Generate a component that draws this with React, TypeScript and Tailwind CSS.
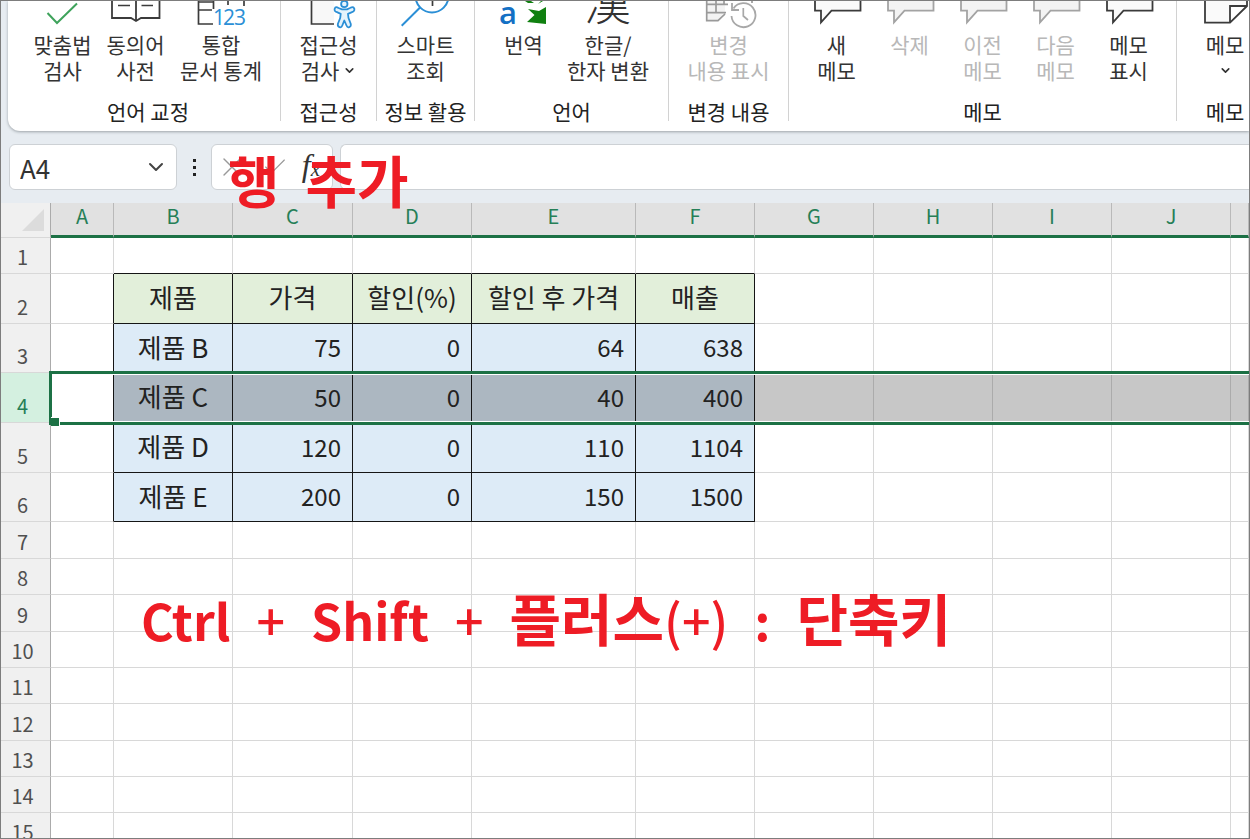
import { ReactNode } from 'react'
import clsx from 'clsx'
import { Check, ChevronDown, X } from 'lucide-react'

const SANS = "font-['Noto_Sans_CJK_KR','Noto_Sans',sans-serif]"

function Icon({ children }: { children: ReactNode }) {
    return (
        <svg width="56" height="30" viewBox="0 0 56 30" fill="none" className="shrink-0" aria-hidden="true">
            {children}
        </svg>
    )
}

const checkIcon = <Icon><path d="M12.5 12 22 22 42 2.5" stroke="#3fa35c" strokeWidth="2" /></Icon>

const bookIcon = (
    <Icon>
        <path d="M4 -2V17H23L28 20L33 17H51.5V-2M28 -2V19" stroke="#3b3b3b" strokeWidth="1.8" />
        <path d="M10 4.5H22M33.5 4.5H45" stroke="#3b3b3b" strokeWidth="1.6" />
    </Icon>
)

const statsIcon = (
    <Icon>
        <path d="M5.5 -1V23H20M5.5 9H19M20.5 -1V8M5.5 1H20M35 -1V4M51 -1V5" stroke="#3b3b3b" strokeWidth="1.7" />
        <text x="20" y="24" fontSize="21" fill="#2b8fd6" className="font-['Open_Sans']">
            <tspan x="20">1</tspan>
            <tspan x="30">2</tspan>
            <tspan x="41">3</tspan>
        </text>
    </Icon>
)

const accessibilityIcon = (
    <Icon>
        <path d="M10.5 -2V23H33V-2" fill="#f8f8f8" />
        <path d="M10.5 -2V23H33" stroke="#3b3b3b" strokeWidth="1.7" />
        <circle cx="43.3" cy="3" r="3.2" fill="#e5f3fc" stroke="#2b8fd6" strokeWidth="1.8" />
        <path
            d="M34.3 6.5C32.5 9 34 10.6 36 11.2L39.7 12.8L39.2 17L36.8 23C36.5 26.5 40.3 27.5 41.3 24.5L43.3 19.5L45.5 24.5C46.6 27.5 50.3 26.5 49.8 23L47.5 17L47 12.8L51 11.2C53.6 10.4 54.3 8 52.3 6.3C51 5.8 50 6.5 49 7L46 8.3H41L37.5 7C36.3 6.2 35 5.8 34.3 6.5Z"
            fill="#e5f3fc" stroke="#2b8fd6" strokeWidth="1.8" strokeLinejoin="round"
        />
    </Icon>
)

const lookupIcon = (
    <Icon>
        <circle cx="34" cy="-5" r="16.5" stroke="#2b8fd6" strokeWidth="2" />
        <path d="M22.3 6.3 3.7 24.7" stroke="#2b8fd6" strokeWidth="2" />
        <path d="M34.5 -1V5" stroke="#3b3b3b" strokeWidth="1.7" />
    </Icon>
)

const translateIcon = (
    <Icon>
        <text x="3" y="23" fontSize="31" fontWeight="600" fill="#1470c4" className="font-['Open_Sans']">a</text>
        <path d="M50 6V23L31 21L38.5 14L32 8L43 10Z" fill="#108010" />
        <path d="M29 0H35L38 2H32ZM42 3L45 0H47Z" fill="#108010" />
    </Icon>
)

const hanjaIcon = (
    <Icon>
        <text x="4" y="19" fontSize="47" fontWeight="300" fill="#333" className="font-['Noto_Sans_CJK_KR']">漢</text>
    </Icon>
)

const changesIcon = (
    <Icon>
        <path d="M5.7 -2V19.7H17L24 13V-2" fill="#f3f3f3" />
        <path d="M5.7 -2V19.7H17L24 13M5.7 3.3H27M5.7 11.7H25M15 -2V11M23 -2V3M51 0V2" stroke="#9a9a9a" strokeWidth="1.7" />
        <path d="M32.5 7.5A12 12 0 1 1 30.5 15M31 2V9H38" stroke="#a8a8a8" strokeWidth="1.8" />
        <path d="M42.3 7V15L47 19" stroke="#a8a8a8" strokeWidth="1.7" />
    </Icon>
)

function CommentIcon({ muted }: { muted?: boolean }) {
    return (
        <Icon>
            <path
                d="M6 -2V9.7H12V21.3L22.5 9.7H51.5V-2"
                fill={muted ? '#f3f3f3' : '#fafafa'} stroke={muted ? '#a3a3a3' : '#3b3b3b'} strokeWidth="1.8"
            />
        </Icon>
    )
}

const noteIcon = (
    <Icon>
        <path d="M8 -2V21.7H33L50 5V-2M33 21.7V5H50" fill="#fafafa" stroke="#3b3b3b" strokeWidth="1.8" />
    </Icon>
)

type Tool = {
    icon: ReactNode
    lines: string[]
    width?: string
    muted?: boolean
    menu?: boolean
}

type Group = { label: string; className: string; tools: Tool[] }

const groups: Group[] = [
    {
        label: '언어 교정',
        className: 'w-[273px] pl-2',
        tools: [
            { icon: checkIcon, lines: ['맞춤법', '검사'] },
            { icon: bookIcon, lines: ['동의어', '사전'] },
            { icon: statsIcon, lines: ['통합', '문서 통계'], width: 'w-[98px]' },
        ],
    },
    { label: '접근성', className: 'w-[96px]', tools: [{ icon: accessibilityIcon, lines: ['접근성', '검사'], menu: true }] },
    { label: '정보 활용', className: 'w-[98px]', tools: [{ icon: lookupIcon, lines: ['스마트', '조회'] }] },
    {
        label: '언어',
        className: 'w-[194px]',
        tools: [
            { icon: translateIcon, lines: ['번역'] },
            { icon: hanjaIcon, lines: ['한글/', '한자 변환'], width: 'w-[96px]' },
        ],
    },
    {
        label: '변경 내용',
        className: 'w-[120px]',
        tools: [{ icon: changesIcon, lines: ['변경', '내용 표시'], width: 'w-[98px]', muted: true }],
    },
    {
        label: '메모',
        className: 'w-[388px]',
        tools: [
            { icon: <CommentIcon />, lines: ['새', '메모'] },
            { icon: <CommentIcon muted />, lines: ['삭제'], muted: true },
            { icon: <CommentIcon muted />, lines: ['이전', '메모'], muted: true },
            { icon: <CommentIcon muted />, lines: ['다음', '메모'], muted: true },
            { icon: <CommentIcon />, lines: ['메모', '표시'] },
        ],
    },
    { label: '메모', className: 'w-[96px]', tools: [{ icon: noteIcon, lines: ['메모', ''], menu: true }] },
]

function ToolButton({ icon, lines, width = 'w-[73px]', muted, menu }: Tool) {
    return (
        <button
            type="button"
            disabled={muted}
            className={clsx('flex shrink-0 flex-col items-center', width, muted ? 'text-[#b8b8b8]' : 'text-[#333]')}
        >
            {icon}
            {lines.map((line, i) => (
                <span key={i} className="flex h-[26px] items-center gap-1 whitespace-nowrap leading-[26px]">
                    {line}
                    {menu && i === lines.length - 1 && <ChevronDown size={13} strokeWidth={3} />}
                </span>
            ))}
        </button>
    )
}

function Ribbon() {
    return (
        <div className="ml-[7px] flex h-[130px] overflow-hidden rounded-bl-xl bg-white text-[21px] shadow-[0_1px_3px_#9ca3a8]">
            {groups.map((group, i) => (
                <section
                    key={i}
                    className={clsx('flex h-[120px] shrink-0 flex-col justify-between border-r border-[#d2d2d2] last:border-r-0', group.className)}
                >
                    <div className="flex justify-center">
                        {group.tools.map((tool, j) => <ToolButton key={j} {...tool} />)}
                    </div>
                    <h2 className="text-center leading-5 text-[#222] whitespace-nowrap">{group.label}</h2>
                </section>
            ))}
        </div>
    )
}

function FormulaBar() {
    const box = 'flex h-[46px] items-center border border-[#cdd1d5] bg-white'
    return (
        <div className="flex h-[72px] items-center pt-1 pb-1 pl-2">
            <div className={clsx(box, 'w-[168px] rounded-md px-2')}>
                <input aria-label="이름 상자" defaultValue="A4" className="w-full min-w-0 pl-[2px] text-[26px] text-[#333] outline-none" />
                <button type="button" aria-label="이름 목록"><ChevronDown size={24} strokeWidth={2} className="text-[#444]" /></button>
            </div>
            <div className="flex w-[34px] flex-col items-center gap-1">
                <i className="size-[3px] bg-[#222]" />
                <i className="size-[3px] bg-[#222]" />
                <i className="size-[3px] bg-[#222]" />
            </div>
            <div className={clsx(box, 'w-[122px] justify-between rounded-md px-1')}>
                <button type="button" aria-label="취소"><X size={32} strokeWidth={1} className="text-[#999]" /></button>
                <button type="button" aria-label="입력"><Check size={28} strokeWidth={1} className="text-[#999]" /></button>
                <button type="button" aria-label="함수 삽입" className="pr-2 font-['Liberation_Serif',serif] text-[32px] leading-8 text-[#333] italic">
                    f<span className="text-[21px]">x</span>
                </button>
            </div>
            <div className={clsx(box, 'ml-[7px] flex-1 rounded-l-md border-r-0')}>
                <input aria-label="수식 입력줄" className="w-full px-3 text-[26px] outline-none" />
            </div>
        </div>
    )
}

const columns = [
    { name: 'A', width: 'w-[63px]' },
    { name: 'B', width: 'w-[119px]' },
    { name: 'C', width: 'w-[120px]' },
    { name: 'D', width: 'w-[119px]' },
    { name: 'E', width: 'w-[164px]' },
    { name: 'F', width: 'w-[119px]' },
    { name: 'G', width: 'w-[119px]' },
    { name: 'H', width: 'w-[119px]' },
    { name: 'I', width: 'w-[119px]' },
    { name: 'J', width: 'w-[119px]' },
    { name: '', width: '' },
]

const rows = [
    { height: 'h-[36px]' },
    { height: 'h-[50px]', cells: ['제품', '가격', '할인(%)', '할인 후 가격', '매출'] },
    { height: 'h-[49px]', cells: ['제품 B', '75', '0', '64', '638'] },
    { height: 'h-[50px]', cells: ['제품 C', '50', '0', '40', '400'] },
    { height: 'h-[50px]', cells: ['제품 D', '120', '0', '110', '1104'] },
    { height: 'h-[49px]', cells: ['제품 E', '200', '0', '150', '1500'] },
    { height: 'h-[37px]' },
    { height: 'h-[36px]' },
    { height: 'h-[37px]' },
    { height: 'h-[36px]' },
    { height: 'h-[36px]' },
    { height: 'h-[37px]' },
    { height: 'h-[36px]' },
    { height: 'h-[36px]' },
    { height: 'h-[36px]' },
]

const SELECTED = 4

function cellClass(row: number, col: number) {
    const inTable = row >= 2 && row <= 6 && col >= 1 && col <= 5
    const selected = row === SELECTED
    const darkRight = row >= 2 && row <= 6 && col <= 5
    const darkBottom = row <= 6 && col >= 1 && col <= 5
    return clsx(
        'border-r border-b p-0 whitespace-nowrap',
        darkRight ? 'border-r-[#151515]' : selected ? 'border-r-[#ababab]' : 'border-r-[#d8d8d8]',
        darkBottom ? 'border-b-[#151515]' : 'border-b-[#d8d8d8]',
        inTable && row === 2 && 'bg-[#e2efda]',
        inTable && row > 2 && !selected && 'bg-[#ddebf7]',
        inTable && selected && 'bg-[#acb7c1]',
        !inTable && selected && col > 5 && 'bg-[#c7c7c7]',
        row === 2 || col === 1 ? 'pb-[3px] text-center text-[26px]' : 'pr-[11px] pb-[2px] text-right text-[24px]',
    )
}

function Sheet() {
    return (
        <table className="w-full table-fixed border-separate border-spacing-0 leading-8 text-[#222]">
            <colgroup>
                <col className="w-[50px]" />
                {columns.map((c, i) => <col key={i} className={c.width} />)}
            </colgroup>
            <thead>
                <tr className="h-[35px]">
                    <th className="border-r border-b border-r-[#ababab] border-b-[#d8d8d8] bg-[#f0f0f0] p-0">
                        <svg width="24" height="24" viewBox="0 0 24 24" className="ml-5" aria-hidden="true">
                            <path d="M23 1V23H1Z" fill="#dcdcdc" />
                        </svg>
                    </th>
                    {columns.map((c, i) => (
                        <th
                            key={i}
                            scope="col"
                            className="border-r border-b-3 border-r-[#b9b9b9] border-b-[#1c7145] bg-[#e1e1e1] p-0 pb-[6px] text-[20px] leading-6 font-normal text-[#267f57]"
                        >
                            {c.name}
                        </th>
                    ))}
                </tr>
            </thead>
            <tbody>
                {rows.map((row, i) => {
                    const n = i + 1
                    return (
                        <tr key={n} className={clsx('relative', row.height)}>
                            <th
                                scope="row"
                                className={clsx(
                                    'border-r border-b border-r-[#ababab] border-b-[#d8d8d8] p-0 pr-[6px] align-bottom text-[20px] leading-8 font-normal',
                                    n === SELECTED ? 'bg-[#d4f0e0] text-[#267f57]' : 'bg-[#f0f0f0] text-[#505050]',
                                )}
                            >
                                {n}
                            </th>
                            {columns.map((c, col) => (
                                <td key={col} className={cellClass(n, col)}>
                                    {row.cells?.[col - 1]}
                                    {n === SELECTED && col === 0 && (
                                        <div className="pointer-events-none absolute -top-[2px] -right-2 -bottom-[2px] left-[48px] z-10 border-3 border-[#1c7145] shadow-[inset_0_0_0_1px_#fff]">
                                            <i className="absolute -bottom-1 -left-px size-[9px] border-t border-r border-white bg-[#1c7145]" />
                                        </div>
                                    )}
                                </td>
                            ))}
                        </tr>
                    )
                })}
            </tbody>
        </table>
    )
}

export default function App() {
    return (
        <div className={clsx('relative h-screen overflow-hidden border border-[#7d7d7d] bg-[#e7ecf1]', SANS)}>
            <Ribbon />
            <FormulaBar />
            <div className="bg-white">
                <Sheet />
            </div>

            {/* Captions written over the sheet */}
            <p className="absolute top-[148px] left-[227px] z-20 flex gap-[26px] text-[56px] leading-[60px] font-bold whitespace-nowrap text-[#ee1c25]">
                <span>행</span>
                <span>추가</span>
            </p>
            <p className="absolute top-[586px] left-[140px] z-20 flex items-baseline gap-[26px] text-[50px] leading-[60px] font-bold whitespace-nowrap text-[#ee1c25]">
                <span>Ctrl</span>
                <span className="font-medium">+</span>
                <span>Shift</span>
                <span className="font-medium">+</span>
                <span><span className="text-[56px]">플러스</span><span className="font-medium">(+)</span></span>
                <span>:</span>
                <span className="text-[56px]">단축키</span>
            </p>
        </div>
    )
}
